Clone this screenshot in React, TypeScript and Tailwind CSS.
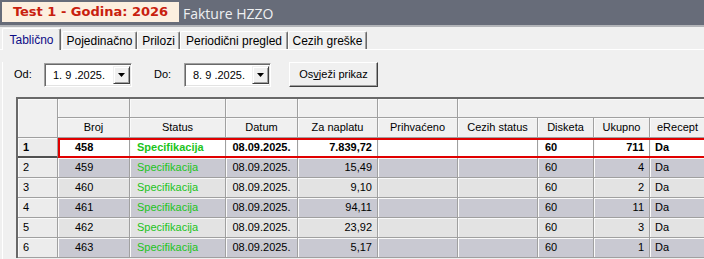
import React from "react";

const W = [
  "w-[40px]",
  "w-[72px]",
  "w-[96px]",
  "w-[72px]",
  "w-[80px]",
  "w-[80px]",
  "w-[80px]",
  "w-[56px]",
  "w-[56px]",
  "w-[56px]",
];

const rows = [
  { n: "1", broj: "458", iznos: "7.839,72", uk: "711" },
  { n: "2", broj: "459", iznos: "15,49", uk: "4" },
  { n: "3", broj: "460", iznos: "9,10", uk: "2" },
  { n: "4", broj: "461", iznos: "94,11", uk: "11" },
  { n: "5", broj: "462", iznos: "23,92", uk: "3" },
  { n: "6", broj: "463", iznos: "5,17", uk: "1" },
];

const cellBase =
  "h-full shrink-0 flex items-center border-r border-b border-[#a0a0a0] shadow-[inset_1px_1px_0_#fafafa] whitespace-nowrap overflow-hidden";

function Combo({ value, w }: { value: string; w: string }) {
  return (
    <div
      className={`${w} h-[24px] mt-[1px] bg-white border border-t-[#a0a0a0] border-l-[#a0a0a0] border-r-white border-b-white shadow-[inset_1px_1px_0_#696969,inset_-1px_-1px_0_#e3e3e3] flex items-center justify-between pl-[8px] pr-[1px]`}
    >
      <span>{value}</span>
      <div className="w-[17px] h-[18px] bg-[#f0f0f0] border border-t-[#f0f0f0] border-l-[#f0f0f0] border-r-[#404040] border-b-[#404040] shadow-[inset_1px_1px_0_#fff,inset_-1px_-1px_0_#a0a0a0] flex items-center justify-center">
        <svg width="7" height="4" viewBox="0 0 7 4">
          <polygon points="0,0 7,0 3.5,4" fill="#000" />
        </svg>
      </div>
    </div>
  );
}

function Tab({ label, w, active }: { label: string; w: string; active?: boolean }) {
  return (
    <div
      className={`${w} ${
        active ? "h-[22px] -mb-px relative z-10 text-[#0c0c86]" : "h-[18px] text-black"
      } bg-[#f0f0f0] border-l border-t border-white border-r border-r-[#696969] shadow-[inset_-1px_0_0_#a0a0a0] flex items-center justify-center text-[12px] rounded-t-[2px]`}
    >
      {label}
    </div>
  );
}

export default function App() {
  return (
    <div className="w-[704px] h-[259px] overflow-hidden bg-[#f0f0f0] font-['Liberation_Sans',Arial,sans-serif] text-[11px] text-black">
      {/* title bar */}
      <div className="h-[27px] bg-[#676c79] border-b-2 border-[#b2b4b8] flex items-start pt-[2px] pl-[2px]">
        <div className="h-[20px] w-[177px] bg-[#fcefdf] flex items-center justify-center font-['DejaVu_Sans',sans-serif] font-bold text-[13px] text-[#c8200e]">
          Test 1 - Godina: 2026
        </div>
        <div className="ml-[4px] h-[22px] flex items-center font-['Open_Sans',sans-serif] text-[14px] text-[#eef0f2]">
          Fakture HZZO
        </div>
      </div>

      {/* tabs */}
      <div className="h-[23px] border-b border-white flex items-end pl-[2px]">
        <Tab label="Tablično" w="w-[59px]" active />
        <div className="w-[1px]" />
        <Tab label="Pojedinačno" w="w-[75px]" />
        <Tab label="Prilozi" w="w-[43px]" />
        <Tab label="Periodični pregled" w="w-[108px]" />
        <Tab label="Cezih greške" w="w-[79px]" />
      </div>

      {/* page */}
      <div className="ml-[2px] border-l border-white h-[209px]">
        <div className="mt-[12px] h-[25px] flex items-start pl-[11px]">
          <div className="w-[30px] h-[25px] flex items-center pb-[1px]">Od:</div>
          <Combo value="1. 9 .2025." w="w-[88px]" />
          <div className="ml-[22px] w-[30px] h-[25px] flex items-center pb-[1px]">Do:</div>
          <Combo value="8. 9 .2025." w="w-[87px]" />
          <button className="ml-[18px] w-[89px] h-[25px] bg-[#f0f0f0] border border-t-white border-l-white border-r-[#404040] border-b-[#404040] shadow-[inset_-1px_-1px_0_#a0a0a0] flex items-center justify-center">
            <span>
              Os<span className="underline">v</span>ježi prikaz
            </span>
          </button>
        </div>

        {/* grid */}
        <div className="mt-[10px] ml-[13px] w-max border-l-2 border-t-2 border-[#696969]">
          {/* header */}
          <div className="flex h-[39px]">
            <div className={`${W[0]} ${cellBase} bg-[#f0f0f0]`} />
            <div className="flex flex-col">
              <div className="flex h-[19px]">
                <div className={`${W[1]} ${cellBase} bg-[#f0f0f0]`} />
                <div className={`${W[2]} ${cellBase} bg-[#f0f0f0]`} />
                <div className={`${W[3]} ${cellBase} bg-[#f0f0f0]`} />
                <div className={`${W[4]} ${cellBase} bg-[#f0f0f0]`} />
                <div className={`${W[5]} ${cellBase} bg-[#f0f0f0]`} />
                <div className={`w-[248px] ${cellBase} bg-[#f0f0f0]`} />
              </div>
              <div className="flex h-[20px]">
                {["Broj", "Status", "Datum", "Za naplatu", "Prihvaćeno", "Cezih status", "Disketa", "Ukupno", "eRecept"].map(
                  (h, i) => (
                    <div key={h} className={`${W[i + 1]} ${cellBase} bg-[#f0f0f0] justify-center`}>
                      {h}
                    </div>
                  )
                )}
              </div>
            </div>
          </div>

          {/* rows */}
          {rows.map((r, idx) => {
            const sel = idx === 0;
            const bg = sel ? "bg-white" : idx % 2 === 1 ? "bg-[#c9c9d2]" : "bg-[#e3e3e3]";
            const fw = sel ? "font-bold" : "";
            return (
              <div key={r.n} className="flex h-[20px]">
                <div
                  className={`${W[0]} ${cellBase} bg-[#ececec] pl-[5px] ${fw} ${
                    sel ? "border-b-2 border-b-[#505050]" : ""
                  }`}
                >
                  {r.n}
                </div>
                <div className={`relative flex h-full ${fw}`}>
                  <div className={`${W[1]} ${cellBase} ${bg} pl-[17px]`}>{r.broj}</div>
                  <div className={`${W[2]} ${cellBase} ${bg} pl-[7px] text-[#1cc41c]`}>Specifikacija</div>
                  <div className={`${W[3]} ${cellBase} ${bg} justify-center`}>08.09.2025.</div>
                  <div className={`${W[4]} ${cellBase} ${bg} justify-end pr-[5px]`}>{r.iznos}</div>
                  <div className={`${W[5]} ${cellBase} ${bg}`} />
                  <div className={`${W[6]} ${cellBase} ${bg}`} />
                  <div className={`${W[7]} ${cellBase} ${bg} pl-[7px]`}>60</div>
                  <div className={`${W[8]} ${cellBase} ${bg} justify-end pr-[5px]`}>{r.uk}</div>
                  <div className={`${W[9]} ${cellBase} ${bg} pl-[5px]`}>Da</div>
                  {sel && (
                    <div className="absolute left-0 right-0 top-0 bottom-0 border-2 border-[#e00000] pointer-events-none" />
                  )}
                </div>
              </div>
            );
          })}
        </div>
      </div>
    </div>
  );
}
